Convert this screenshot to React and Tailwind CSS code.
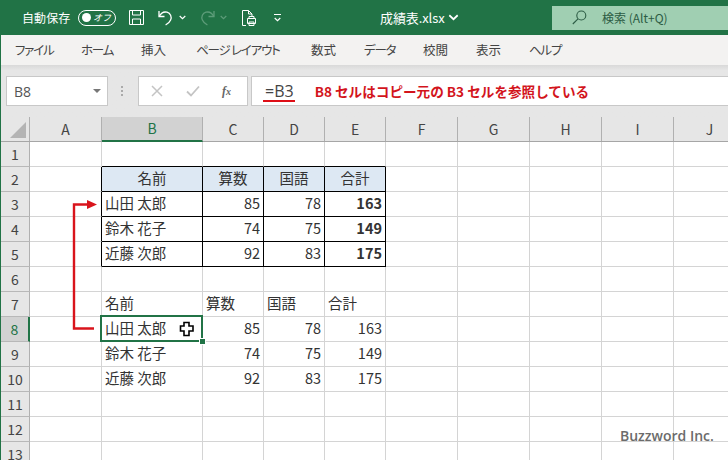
const COLS = [
  { name: "A", w: "w-[72px]" },
  { name: "B", w: "w-[101px]" },
  { name: "C", w: "w-[61px]" },
  { name: "D", w: "w-[61px]" },
  { name: "E", w: "w-[61px]" },
  { name: "F", w: "w-[72px]" },
  { name: "G", w: "w-[72px]" },
  { name: "H", w: "w-[72px]" },
  { name: "I", w: "w-[72px]" },
  { name: "J", w: "w-[72px]" },
];

// values by row number, in columns B to E
const DATA = {
  2: ["名前", "算数", "国語", "合計"],
  3: ["山田 太郎", "85", "78", "163"],
  4: ["鈴木 花子", "74", "75", "149"],
  5: ["近藤 次郎", "92", "83", "175"],
  7: ["名前", "算数", "国語", "合計"],
  8: ["山田 太郎", "85", "78", "163"],
  9: ["鈴木 花子", "74", "75", "149"],
  10: ["近藤 次郎", "92", "83", "175"],
};

const ROWS = [1, 2, 3, 4, 5, 6, 7, 8, 9, 10, 11, 12, 13];

const Tab = ({ className, children }) => (
  <span className={`whitespace-nowrap ${className}`}>{children}</span>
);

const SaveIcon = () => (
  <svg width="17" height="17" viewBox="0 0 17 17" fill="none" stroke="#fff" strokeWidth="1">
    <path d="M1.5 1.5h14v14h-14z" />
    <path d="M4.5 1.5v4.5h8v-4.5M4.5 15.5v-5.5h8v5.5" />
  </svg>
);

const UndoIcon = ({ color }) => (
  <svg width="16" height="18" viewBox="0 0 16 18" fill="none" stroke={color} strokeWidth="1.3">
    <path d="M1 2v5.5h5.5" />
    <path d="M1.3 7.3C3 4 6 2.5 9 3.2c3.5 1 5 4.5 3.6 7.8-.8 2-2.6 3.7-5 5" />
  </svg>
);

const Chevron = ({ color }) => (
  <svg width="7" height="5" viewBox="0 0 7 5" fill="none" stroke={color} strokeWidth="1.2">
    <path d="M.7 1l2.8 2.6L6.3 1" />
  </svg>
);

const PrintIcon = () => (
  <svg width="16" height="18" viewBox="0 0 16 18" fill="none" stroke="#fff" strokeWidth="1">
    <path d="M5 16.5H1.5V1.5h6l3.5 3.500v3" />
    <path d="M7.5 1.5V5H11" />
    <path d="M6.5 9.5h8v5h-8zM8 9.5V7.5h5v2M8 13h5v3.5H8z" />
  </svg>
);

const Cell = ({ row, col, i }) => {
  const value = i >= 1 && i <= 4 && DATA[row] ? DATA[row][i - 1] : null;
  const inTable = row >= 2 && row <= 5 && i >= 1 && i <= 4;
  const isHead = row === 2 && inTable;
  const isSum = i === 4 && inTable && !isHead;
  const isName = i === 1;
  const isLabel = row === 2 || row === 7;

  // the line right of and below a cell is its own border, so the table edge
  // falls on the neighbouring cell for its left and top sides
  const blackRight = row >= 2 && row <= 5 && i >= 0 && i <= 4;
  const blackBottom = row >= 1 && row <= 5 && i >= 1 && i <= 4;

  return (
    <div
      className={`relative h-[25px] shrink-0 flex items-center pb-[2px] border-r border-b text-[14.5px] leading-none text-[#333] ${col.w}
        ${blackRight ? "border-r-black" : "border-r-[#d4d4d4]"}
        ${blackBottom ? "border-b-black" : "border-b-[#d4d4d4]"}
        ${isHead ? "bg-[#dde8f3] justify-center" : ""}
        ${!isHead && !isName && !isLabel ? "justify-end pr-[3px]" : ""}
        ${!isHead && (isName || isLabel) ? "pl-[3px]" : ""}
        ${isSum ? "font-bold text-[#111]" : ""}`}
    >
      {value}
      {row === 8 && i === 1 && (
        <>
          <div className="absolute z-10 left-[-2px] top-[-2px] w-[103px] h-[27px] border-2 border-[#217346]" />
          <div className="absolute z-10 left-[98px] top-[22px] w-[5px] h-[5px] bg-[#217346] outline outline-1 outline-white" />
          <svg className="absolute z-10 left-[77px] top-[4px]" width="16" height="16" viewBox="0 0 16 16">
            <path
              d="M5 1.5h5v3.5h4v5h-4v4.5H5V10H1.5V5H5z"
              fill="#fff"
              stroke="#000"
              strokeWidth="1.6"
            />
          </svg>
        </>
      )}
    </div>
  );
};

const App = () => {
  return (
    <div className="relative w-[728px] h-[460px] overflow-hidden bg-white border-l border-[#217346] font-['Noto_Sans_CJK_JP','Liberation_Sans',sans-serif]">
      {/* title bar */}
      <div className="flex items-center h-[35px] bg-[#217346] text-white">
        <span className="ml-[21px] text-[12px] w-[49px] whitespace-nowrap tracking-[0.1px]">自動保存</span>
        <div className="ml-[7px] w-[38px] h-[16px] rounded-full border border-white flex items-center justify-between pl-[3px] pr-[4px]">
          <div className="w-[9px] h-[9px] rounded-full bg-white" />
          <span className="text-[9px] leading-none italic">オフ</span>
        </div>
        <div className="ml-[12px] flex"><SaveIcon /></div>
        <div className="ml-[13px] flex"><UndoIcon color="#fff" /></div>
        <div className="ml-[5px] flex"><Chevron color="#fff" /></div>
        <div className="ml-[13px] flex -scale-x-100"><UndoIcon color="#5d9c79" /></div>
        <div className="ml-[5px] flex"><Chevron color="#5d9c79" /></div>
        <div className="ml-[14px] flex"><PrintIcon /></div>
        <div className="ml-[17px] flex flex-col items-center gap-[2px]">
          <div className="w-[7px] h-px bg-white" />
          <Chevron color="#fff" />
        </div>
        <span className="ml-[99px] w-[63px] text-[13px] tracking-[-0.1px] whitespace-nowrap">成績表.xlsx</span>
        <div className="ml-[7px] flex scale-150"><Chevron color="#fff" /></div>
        <div className="ml-[95px] flex items-center w-[176px] h-[24px] bg-[#a0cfb2] text-[#2c5c44] text-[12px]">
          <svg className="ml-[20px]" width="15" height="15" viewBox="0 0 15 15" fill="none" stroke="#2c5c44" strokeWidth="1.1">
            <circle cx="9.3" cy="5.5" r="4.5" />
            <path d="M6 8.800L.8 14" />
          </svg>
          <span className="ml-[15px] whitespace-nowrap">検索 (Alt+Q)</span>
        </div>
      </div>

      {/* ribbon tabs */}
      <div className="flex items-center h-[30px] bg-[#f3f2f1] text-[12.5px] text-[#444] [font-feature-settings:'palt']">
        <Tab className="ml-[14px] w-[37px] tracking-[-1.2px]">ファイル</Tab>
        <Tab className="ml-[29px] w-[32px] tracking-[-1.2px]">ホーム</Tab>
        <Tab className="ml-[28px] w-[25px]">挿入</Tab>
        <Tab className="ml-[30px] w-[85px] tracking-[-1.2px]">ページ レイアウト</Tab>
        <Tab className="ml-[30px] w-[26px]">数式</Tab>
        <Tab className="ml-[27px] w-[32px] tracking-[-1.2px]">データ</Tab>
        <Tab className="ml-[27px] w-[25px]">校閲</Tab>
        <Tab className="ml-[28px] w-[26px]">表示</Tab>
        <Tab className="ml-[27px] w-[32px] tracking-[-1.2px]">ヘルプ</Tab>
      </div>

      {/* formula bar */}
      <div className="h-[52px] bg-[#e6e6e6] bg-gradient-to-b from-[#d9d9d9] to-[#e6e6e6] to-[10%] flex items-start pt-[11px] pl-[5px]">
        <div className="w-[102px] h-[30px] bg-white border border-[#c8c8c8] flex items-center justify-between pl-[7px] pr-[6px] text-[14px] text-[#555] font-['Open_Sans',sans-serif]">
          <span>B8</span>
          <div className="w-0 h-0 border-x-[4px] border-x-transparent border-t-[4px] border-t-[#777]" />
        </div>
        <div className="ml-[13px] mt-[10px] flex flex-col gap-[2px]">
          <div className="w-[2px] h-[2px] bg-[#aaa]" />
          <div className="w-[2px] h-[2px] bg-[#aaa]" />
          <div className="w-[2px] h-[2px] bg-[#aaa]" />
        </div>
        <div className="ml-[15px] w-[110px] h-[30px] bg-white border border-[#c8c8c8] flex items-center text-[#666]">
          <svg className="ml-[12px]" width="12" height="12" viewBox="0 0 12 12" stroke="#c4c4c4" strokeWidth="1.5">
            <path d="M1 1l10 10M11 1L1 11" />
          </svg>
          <svg className="ml-[23px]" width="14" height="12" viewBox="0 0 14 12" fill="none" stroke="#c4c4c4" strokeWidth="1.8">
            <path d="M1 6.500l4 4L13 1.500" />
          </svg>
          <span className="ml-[22px] text-[12px] italic font-bold font-['Liberation_Serif',serif]">
            f<span className="text-[10px]">x</span>
          </span>
        </div>
        <div className="relative ml-[3px] flex-1 h-[30px] bg-white border border-[#c8c8c8] border-r-0 flex items-center">
          <span className="relative ml-[13px] text-[16px] text-[#444] font-['Open_Sans',sans-serif] whitespace-nowrap">
            =B3
            <div className="absolute left-[-2px] right-[-1px] bottom-[1px] h-[2px] bg-[#de0f17]" />
          </span>
          <span className="ml-[21px] text-[13.6px] font-bold text-[#d3141c] whitespace-nowrap">
            B8 セルはコピー元の B3 セルを参照している
          </span>
        </div>
      </div>

      {/* column headers */}
      <div className="flex h-[25px] bg-[#e6e6e6] border-b border-[#a6a6a6] w-[800px]">
        <div className="w-[29px] shrink-0 border-r border-[#b0b0b0] flex items-end justify-end pr-[3px] pb-[3px]">
          <div className="w-0 h-0 border-l-[16px] border-l-transparent border-b-[16px] border-b-[#b4b4b4]" />
        </div>
        {COLS.map((col) => (
          <div
            key={col.name}
            className={`shrink-0 flex items-center justify-center border-r border-[#b0b0b0] text-[14px] ${col.w} ${
              col.name === "B"
                ? "bg-[#d2d2d2] text-[#217346] border-b-2 border-b-[#217346] h-[25px]"
                : "text-[#444]"
            }`}
          >
            {col.name}
          </div>
        ))}
      </div>

      {/* sheet */}
      {ROWS.map((row) => (
        <div key={row} className="flex w-[800px]">
          <div
            className={`w-[29px] h-[25px] shrink-0 flex items-center justify-center border-b border-[#b8b8b8] text-[14px] ${
              row === 8
                ? "bg-[#d2d2d2] text-[#217346] border-r-2 border-r-[#217346]"
                : "bg-[#e6e6e6] text-[#444] border-r border-r-[#b0b0b0]"
            }`}
          >
            {row}
          </div>
          {COLS.map((col, i) => (
            <Cell key={col.name} row={row} col={col} i={i} />
          ))}
        </div>
      ))}

      {/* reference arrow from B8 to B3 */}
      <svg className="absolute left-0 top-0 pointer-events-none" width="120" height="340" fill="none">
        <path d="M93 328.500H73V204.500H88" stroke="#d9141c" strokeWidth="2.400" />
        <path d="M86 200l10 4.500-10 4.500z" fill="#d9141c" />
      </svg>

      <span className="absolute left-[619px] top-[425px] text-[14px] font-semibold text-[#6b6b6b] font-['Open_Sans',sans-serif]">
        Buzzword Inc.
      </span>
    </div>
  );
};

export default App;
